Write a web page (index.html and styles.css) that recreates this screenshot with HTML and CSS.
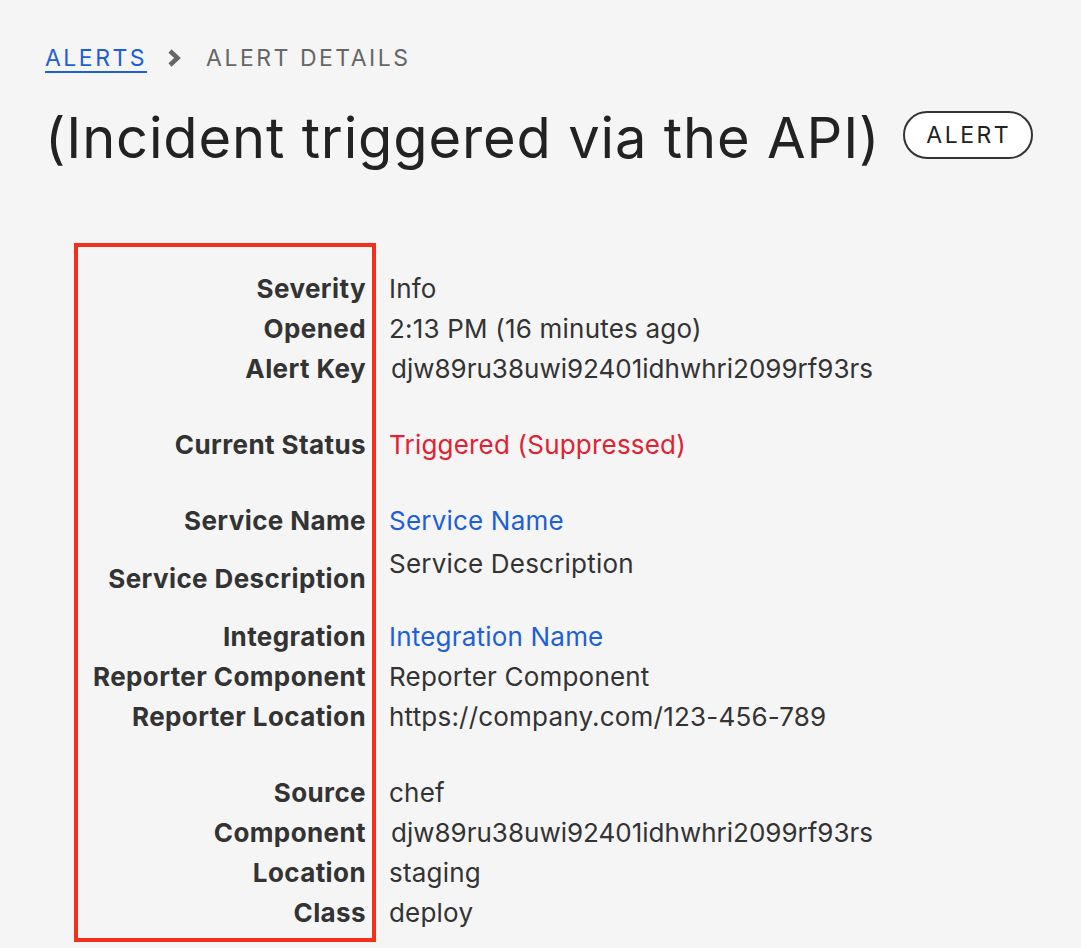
FILE: index.html
```html
<!DOCTYPE html>
<html lang="en">
<head>
    <meta charset="UTF-8">
    <meta name="viewport" content="width=device-width, initial-scale=1.0">
    <title>Alert Details</title>
    <link rel="stylesheet" href="styles.css">
</head>
<body>
    <div class="page">
        <nav class="breadcrumb">
            <a href="#" class="crumb-link">ALERTS</a>
            <svg class="crumb-sep" width="16" height="20" viewBox="0 0 16 20">
                <path d="M4 3 L11.5 10 L4 17" fill="none" stroke="#666" stroke-width="4.5"/>
            </svg>
            <span class="crumb-current">ALERT DETAILS</span>
        </nav>

        <div class="title-row">
            <h1>(Incident triggered via the API)</h1>
            <span class="pill">ALERT</span>
        </div>

        <div class="details">
            <div class="labels">
                <div class="group">
                    <div class="row">Severity</div>
                    <div class="row">Opened</div>
                    <div class="row">Alert Key</div>
                </div>
                <div class="group">
                    <div class="row">Current Status</div>
                </div>
                <div class="group">
                    <div class="row">Service Name</div>
                    <div class="row row-low">Service Description</div>
                </div>
                <div class="group">
                    <div class="row">Integration</div>
                    <div class="row">Reporter Component</div>
                    <div class="row">Reporter Location</div>
                </div>
                <div class="group">
                    <div class="row">Source</div>
                    <div class="row">Component</div>
                    <div class="row">Location</div>
                    <div class="row">Class</div>
                </div>
            </div>

            <div class="values">
                <div class="group">
                    <div class="row">Info</div>
                    <div class="row">2:13 PM (16 minutes ago)</div>
                    <div class="row key">djw89ru38uwi92401idhwhri2099rf93rs</div>
                </div>
                <div class="group">
                    <div class="row status">Triggered (Suppressed)</div>
                </div>
                <div class="group">
                    <div class="row"><a href="#" class="link">Service Name</a></div>
                    <div class="row row-desc">Service Description</div>
                </div>
                <div class="group">
                    <div class="row"><a href="#" class="link">Integration Name</a></div>
                    <div class="row">Reporter Component</div>
                    <div class="row">https://company.com/123-456-789</div>
                </div>
                <div class="group">
                    <div class="row">chef</div>
                    <div class="row key">djw89ru38uwi92401idhwhri2099rf93rs</div>
                    <div class="row">staging</div>
                    <div class="row">deploy</div>
                </div>
            </div>
        </div>
    </div>
</body>
</html>
```

FILE: styles.css
```css
/* Base */
body {
    margin: 0;
    background: #f5f5f5;
    color: #2b2b2b;
    font-family: Inter, "Noto Sans", sans-serif;
}

.page {
    padding: 43px 0 0 45px;
}

/* Breadcrumb */
.breadcrumb {
    display: flex;
    align-items: center;
    height: 30px;
    font-size: 23px;
    letter-spacing: 2.5px;
}

.crumb-link {
    color: #1d5fd8;
    text-decoration: underline;
    text-underline-offset: 5px;
    text-decoration-thickness: 2px;
}

.crumb-sep {
    margin: 0 24px 0 19px;
}

.crumb-current {
    color: #666;
}

/* Title */
.title-row {
    display: flex;
    align-items: center;
    margin-top: 30px;
}

.title-row h1 {
    margin: 0;
    font-size: 56px;
    font-weight: 400;
    line-height: 70px;
    color: #222;
    letter-spacing: 0.85px;
}

.pill {
    margin: 0 0 6px 23px;
    padding: 0 20px 0 21px;
    height: 44px;
    line-height: 44px;
    border: 2px solid #333;
    border-radius: 24px;
    background: #fff;
    font-size: 23px;
    letter-spacing: 2.5px;
    color: #222;
}

/* Details */
.details {
    display: flex;
    margin-top: 70px;
    margin-left: 29px;
    font-size: 26px;
}

.labels {
    width: 288px;
    border: 4px solid #f2301b;
    padding: 22px 6px 5px 0;
    font-weight: 700;
    text-align: right;
    letter-spacing: 0.4px;
    color: #333;
}

.values {
    padding: 26px 0 0 13px;
    letter-spacing: 0.2px;
    color: #333;
}

.group {
    margin-bottom: 36px;
}

.group:last-child {
    margin-bottom: 0;
}

.row {
    height: 40px;
    line-height: 40px;
    white-space: nowrap;
}

.row-low {
    margin-top: 18px;
    margin-bottom: -18px;
}

.row-desc {
    margin-top: 3px;
    margin-bottom: -3px;
}

.key {
    padding-left: 2px;
    letter-spacing: 0;
}

.status {
    color: #e02232;
}

.link {
    color: #1d5fd8;
    text-decoration: none;
}
```
